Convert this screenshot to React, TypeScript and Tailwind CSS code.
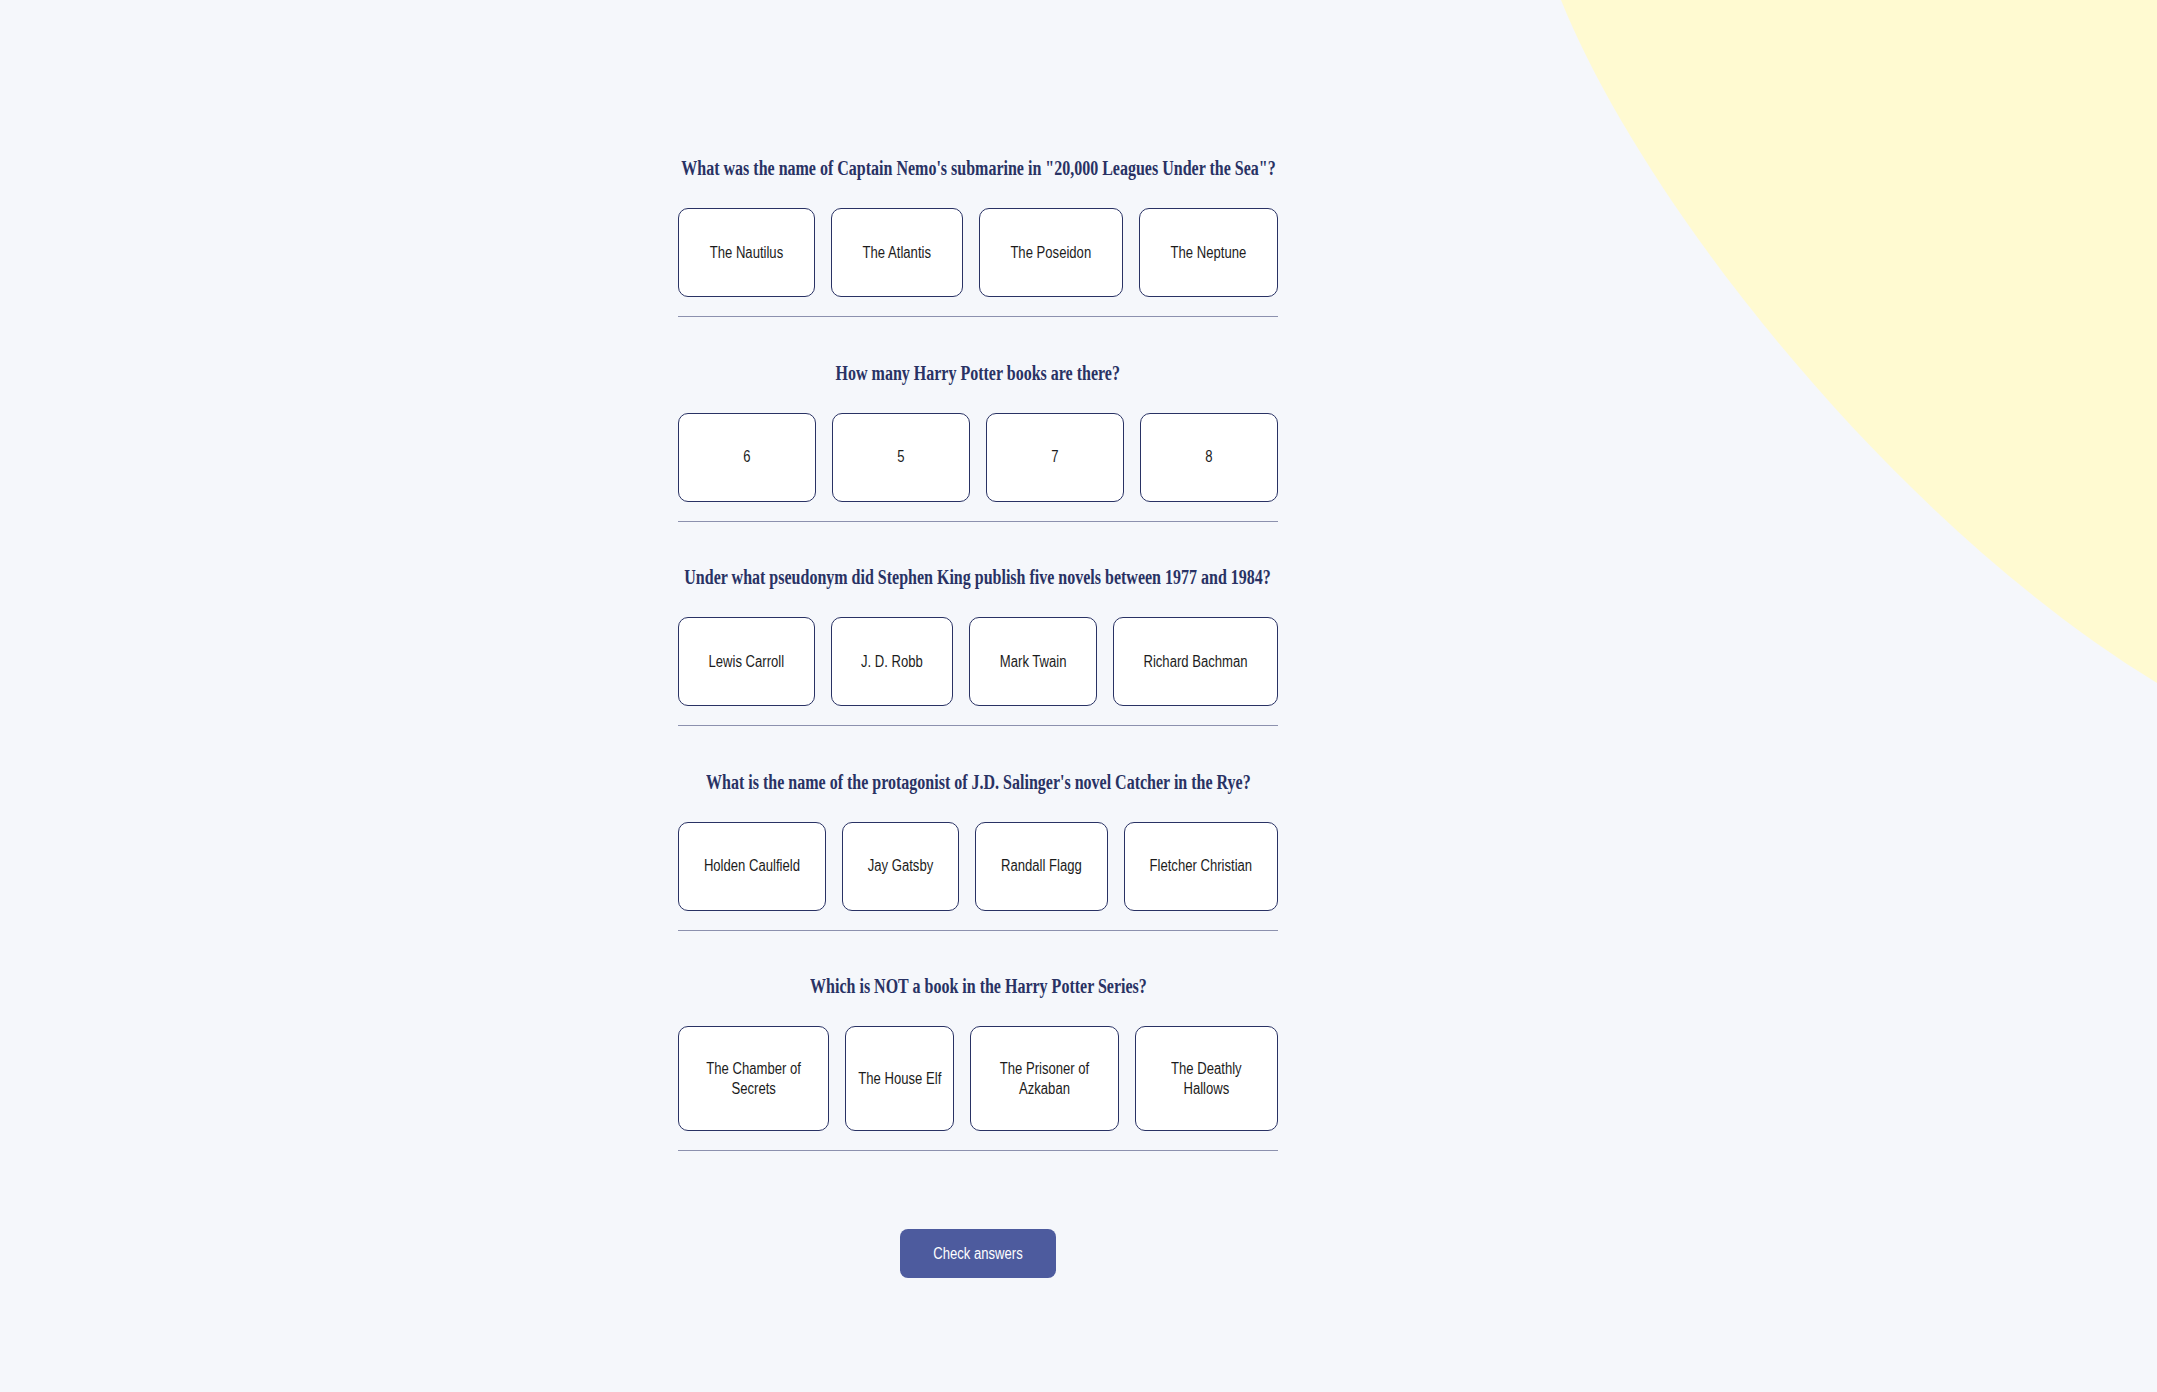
const questions = [
  {
    q: 'What was the name of Captain Nemo\'s submarine in "20,000 Leagues Under the Sea"?',
    answers: ["The Nautilus", "The Atlantis", "The Poseidon", "The Neptune"],
  },
  {
    q: "How many Harry Potter books are there?",
    answers: ["6", "5", "7", "8"],
  },
  {
    q: "Under what pseudonym did Stephen King publish five novels between 1977 and 1984?",
    answers: ["Lewis Carroll", "J. D. Robb", "Mark Twain", "Richard Bachman"],
  },
  {
    q: "What is the name of the protagonist of J.D. Salinger's novel Catcher in the Rye?",
    answers: ["Holden Caulfield", "Jay Gatsby", "Randall Flagg", "Fletcher Christian"],
  },
  {
    q: "Which is NOT a book in the Harry Potter Series?",
    answers: ["The Chamber of Secrets", "The House Elf", "The Prisoner of Azkaban", "The Deathly Hallows"],
  },
];

export default function App() {
  return (
    <div className="relative min-h-screen overflow-hidden bg-[#F5F7FB]">
      {/* yellow blob, top right */}
      <svg className="absolute top-0 right-0" width="597" height="684" viewBox="0 0 597 684">
        <path d="M1 0 C81 200 330 520 597 683 L597 0 Z" fill="#FFFAD1" />
      </svg>

      <main className="relative ml-[678px] w-[600px] pt-[156px] pb-10 flex flex-col items-stretch">
        <div className="flex flex-col gap-[43.5px]">
          {questions.map((item) => (
            <Question key={item.q} question={item.q} answers={item.answers} />
          ))}
        </div>

        <div className="mt-[78px] flex justify-center">
          <button className="rounded-[8px] bg-[#4D5B9E] px-[33px] py-[16px] text-[13.1px] leading-[17px] text-white font-['Liberation_Sans',sans-serif]">
            <span className="block scale-y-[1.22]">Check answers</span>
          </button>
        </div>
      </main>
    </div>
  );
}

function Question({ question, answers }: { question: string; answers: string[] }) {
  return (
    <section>
      <h2 className="mb-[28px] flex justify-center text-[20px] leading-6 font-bold text-[#293264] font-['Liberation_Serif',serif]">
        <span className="inline-block whitespace-nowrap scale-x-[0.8]">{question}</span>
      </h2>
      <div className="grid grid-cols-[repeat(4,auto)] gap-x-4">
        {answers.map((a) => (
          <button
            key={a}
            className="rounded-[10px] border border-[#293264] bg-white px-3 py-[35.75px] text-center text-[13.1px] leading-[15.5px] text-[#1c1c1c] font-['Liberation_Sans',sans-serif]"
          >
            <span className="block scale-y-[1.22]">{a}</span>
          </button>
        ))}
      </div>
      <div className="mt-[19px] h-px bg-[#8c91ae]" />
    </section>
  );
}
